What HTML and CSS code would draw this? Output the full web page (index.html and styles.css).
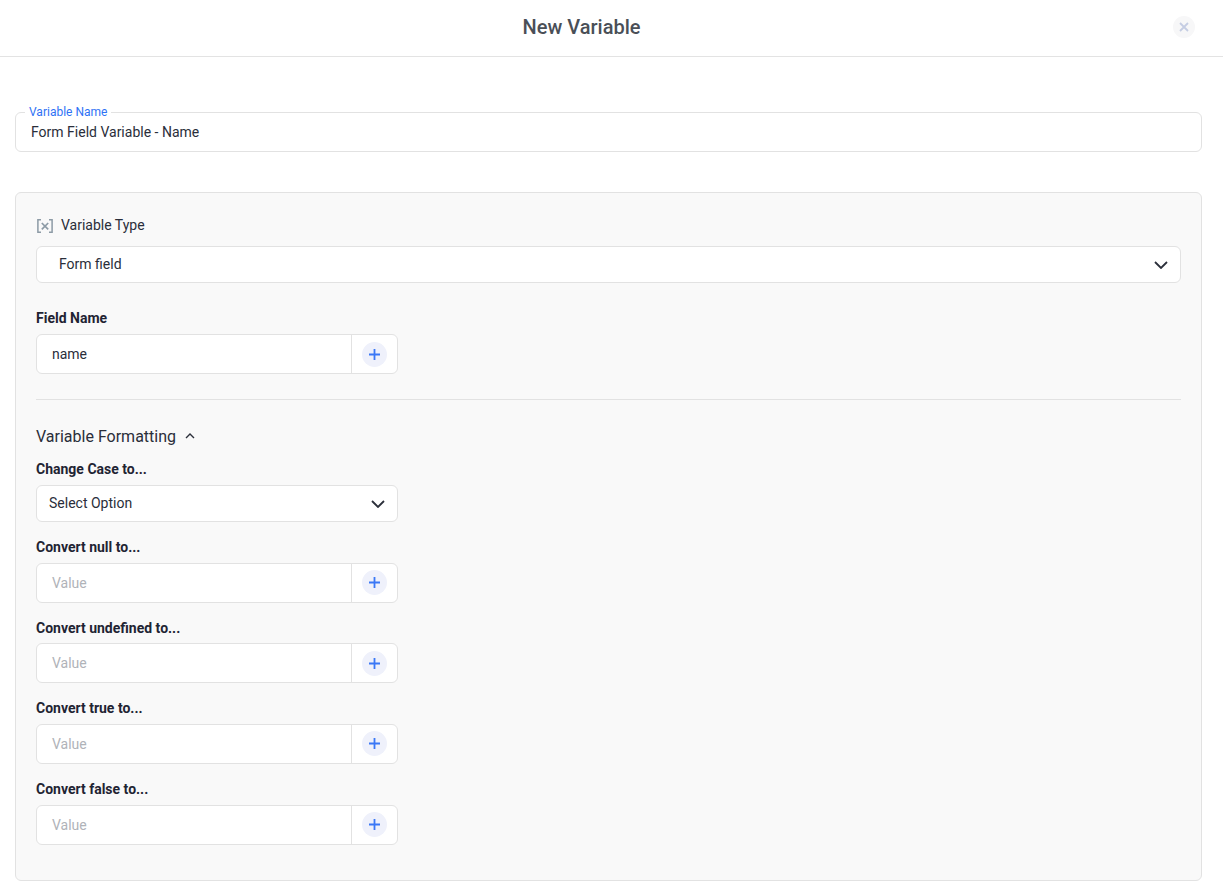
FILE: index.html
```html
<!DOCTYPE html>
<html lang="en">
<head>
<meta charset="utf-8">
<title>New Variable</title>
<link rel="stylesheet" href="styles.css">
</head>
<body>
<header class="header">
  <h1 class="title">New Variable</h1>
  <button class="close" aria-label="Close">
    <svg width="10" height="10" viewBox="0 0 10 10"><path d="M1 1l8 8M9 1l-8 8" stroke="#c5cde3" stroke-width="1.8" fill="none"/></svg>
  </button>
</header>
<main class="main">
  <div class="name-field">
    <span class="legend">Variable Name</span>
    <span class="text">Form Field Variable - Name</span>
  </div>
  <section class="panel">
    <div class="type-label">
      <span class="type-icon">
        <svg width="16" height="14" viewBox="0 0 16 14"><path d="M4 .75H.9v12.5H4M12 .75h3.100v12.5H12" stroke="#8d9ba6" stroke-width="1.500" fill="none"/><path d="M4.800 4l6.400 6.400M11.200 4l-6.400 6.400" stroke="#8d9ba6" stroke-width="1.700" fill="none"/></svg>
      </span>
      Variable Type
    </div>
    <div class="select select-wide">
      <span>Form field</span>
      <svg class="chev" width="14" height="8" viewBox="0 0 14 8"><path d="M1 1l6 6 6-6" stroke="#2b2f3a" stroke-width="1.800" fill="none"/></svg>
    </div>
    <label class="label label-first">Field Name</label>
    <div class="input-group">
      <span class="input-value">name</span>
      <span class="add"><span class="add-btn"><svg width="13" height="13" viewBox="0 0 13 13"><path d="M6.500 1v11M1 6.500h11" stroke="#3b78f6" stroke-width="1.800" fill="none"/></svg></span></span>
    </div>
    <hr class="divider">
    <div class="format-title">
      Variable Formatting
      <svg width="10" height="6" viewBox="0 0 10 6"><path d="M1 5l4-4 4 4" stroke="#2b2f3a" stroke-width="1.400" fill="none"/></svg>
    </div>
    <label class="label label-case">Change Case to...</label>
    <div class="select select-narrow">
      <span>Select Option</span>
      <svg class="chev" width="14" height="8" viewBox="0 0 14 8"><path d="M1 1l6 6 6-6" stroke="#2b2f3a" stroke-width="1.800" fill="none"/></svg>
    </div>
    <label class="label">Convert null to...</label>
    <div class="input-group">
      <span class="input-value placeholder">Value</span>
      <span class="add"><span class="add-btn"><svg width="13" height="13" viewBox="0 0 13 13"><path d="M6.500 1v11M1 6.500h11" stroke="#3b78f6" stroke-width="1.800" fill="none"/></svg></span></span>
    </div>
    <label class="label">Convert undefined to...</label>
    <div class="input-group">
      <span class="input-value placeholder">Value</span>
      <span class="add"><span class="add-btn"><svg width="13" height="13" viewBox="0 0 13 13"><path d="M6.500 1v11M1 6.500h11" stroke="#3b78f6" stroke-width="1.800" fill="none"/></svg></span></span>
    </div>
    <label class="label">Convert true to...</label>
    <div class="input-group">
      <span class="input-value placeholder">Value</span>
      <span class="add"><span class="add-btn"><svg width="13" height="13" viewBox="0 0 13 13"><path d="M6.500 1v11M1 6.500h11" stroke="#3b78f6" stroke-width="1.800" fill="none"/></svg></span></span>
    </div>
    <label class="label">Convert false to...</label>
    <div class="input-group">
      <span class="input-value placeholder">Value</span>
      <span class="add"><span class="add-btn"><svg width="13" height="13" viewBox="0 0 13 13"><path d="M6.500 1v11M1 6.500h11" stroke="#3b78f6" stroke-width="1.800" fill="none"/></svg></span></span>
    </div>
  </section>
</main>
</body>
</html>
```
FILE: styles.css
```css
* { box-sizing: border-box; }
html, body { margin: 0; padding: 0; }
body {
  background: #fff;
  font-family: Roboto, "Liberation Sans", sans-serif;
  font-size: 14px;
  color: #1f2433;
  overflow: hidden;
  height: 896px;
}
.header {
  height: 57px;
  padding-right: 60px;
  border-bottom: 1px solid #e3e3e3;
  display: flex;
  align-items: center;
  justify-content: center;
  position: relative;
}
.title {
  margin: 0 0 2px;
  font-size: 20px;
  font-weight: 500;
  color: #4a4f57;
}
.close {
  position: absolute;
  left: 1173px;
  top: 16px;
  width: 22px;
  height: 22px;
  border: 0;
  padding: 0;
  border-radius: 50%;
  background: #f7f7f8;
  display: flex;
  align-items: center;
  justify-content: center;
}
.main { padding: 55px 21px 0 15px; }
.name-field {
  position: relative;
  height: 40px;
  border: 1px solid #e2e2e2;
  border-radius: 6px;
  padding: 0 15px;
  display: flex;
  align-items: center;
  background: #fff;
}
.text { font-size: 14px; color: #2a2e3a; }
.legend {
  position: absolute;
  left: 9px;
  top: -8px;
  padding: 0 4px;
  background: #fff;
  font-size: 12px;
  line-height: 14px;
  color: #2f72f5;
}
.panel {
  margin-top: 40px;
  height: 689px;
  padding: 0 20px;
  border: 1px solid #e2e2e2;
  border-radius: 6px;
  background: #f9f9f9;
}
.type-label {
  height: 20px;
  margin-top: 22px;
  display: flex;
  align-items: center;
  font-size: 14px;
  color: #2a2e3a;
}
.type-icon { display: flex; margin: 1px 8px 0 1px; }
.select {
  background: #fff;
  border: 1px solid #e2e2e2;
  border-radius: 6px;
  height: 37px;
  padding-bottom: 2px;
  display: flex;
  align-items: center;
  justify-content: space-between;
  font-size: 14px;
  color: #2a2e3a;
}
.select-wide { margin-top: 11px; padding-left: 22px; padding-right: 12px; }
.select-narrow { width: 362px; padding-left: 12px; padding-right: 12px; }
.chev { display: block; margin-top: 2px; }
.label {
  display: block;
  height: 20px;
  margin-top: 15px;
  margin-bottom: 5.67px;
  font-size: 14px;
  line-height: 20px;
  font-weight: 700;
  color: #1f2433;
}
.label-first { margin-top: 25px; margin-bottom: 6px; }
.label-case { margin-top: 11px; margin-bottom: 6px; }
.input-group {
  width: 362px;
  height: 40px;
  display: flex;
  background: #fff;
  border: 1px solid #e2e2e2;
  border-radius: 6px;
}
.input-value {
  flex: 1;
  padding-left: 15px;
  display: flex;
  align-items: center;
  font-size: 14px;
  color: #2a2e3a;
}
.placeholder { color: #b0b3b9; }
.add {
  width: 46px;
  border-left: 1px solid #e2e2e2;
  display: flex;
  align-items: center;
  justify-content: center;
}
.add-btn {
  width: 25px;
  height: 25px;
  border-radius: 50%;
  background: #eff1fb;
  display: flex;
  align-items: center;
  justify-content: center;
}
.divider {
  margin: 25px 0 0;
  border: 0;
  border-top: 1px solid #e2e2e2;
}
.format-title {
  height: 24px;
  margin-top: 24px;
  display: flex;
  align-items: center;
  gap: 9px;
  font-size: 16px;
  color: #2a2e3a;
}
```
